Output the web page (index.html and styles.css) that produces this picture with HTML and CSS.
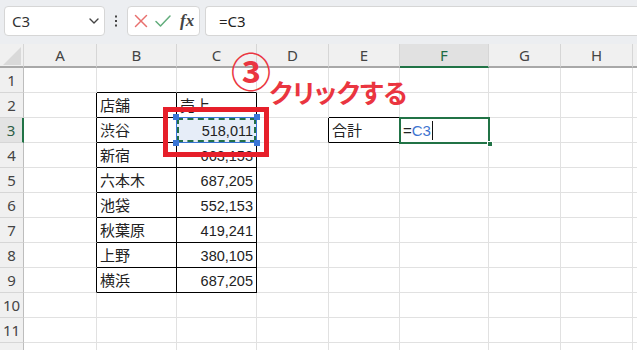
FILE: index.html
```html
<!DOCTYPE html>
<html lang="ja">
<head>
    <meta charset="UTF-8">
    <title>Excel - C3参照</title>
    <link rel="stylesheet" href="styles.css">
</head>
<body>
    <div class="toolbar">
        <div class="namebox">
            <span>C3</span>
            <svg width="12" height="8" viewBox="0 0 12 8" fill="none" stroke="#444" stroke-width="1.4" stroke-linecap="round" stroke-linejoin="round">
                <path d="M2 2l4 4 4-4"></path>
            </svg>
        </div>
        <div class="dots">
            <svg width="4" height="12" viewBox="0 0 4 12" fill="#444">
                <rect x="1" y="0.5" width="2" height="2"></rect>
                <rect x="1" y="5" width="2" height="2"></rect>
                <rect x="1" y="9.5" width="2" height="2"></rect>
            </svg>
        </div>
        <div class="btns">
            <svg width="14" height="14" viewBox="0 0 14 14" fill="none" stroke="#e8706e" stroke-width="1.5" stroke-linecap="round">
                <path d="M1.5 1.5l11 11"></path>
                <path d="M12.5 1.5l-11 11"></path>
            </svg>
            <svg width="16" height="14" viewBox="0 0 16 14" fill="none" stroke="#62ad7c" stroke-width="1.5" stroke-linecap="round" stroke-linejoin="round">
                <path d="M1 7.5l4.5 4.5 9.5-10"></path>
            </svg>
            <span class="fx">fx</span>
        </div>
        <div class="formula">=C3</div>
    </div>
    <div class="strip"></div>

    <div class="sheet">
        <!-- header -->
        <div class="c ch corner"></div>
        <div class="c ch">A</div>
        <div class="c ch">B</div>
        <div class="c ch">C</div>
        <div class="c ch">D</div>
        <div class="c ch">E</div>
        <div class="c ch on">F</div>
        <div class="c ch">G</div>
        <div class="c ch">H</div>
        <div class="c ch"></div>

        <!-- 1 -->
        <div class="c rh">1</div>
        <div class="c"></div>
        <div class="c bb"></div>
        <div class="c bb"></div>
        <div class="c"></div><div class="c"></div><div class="c"></div><div class="c"></div><div class="c"></div><div class="c"></div>

        <!-- 2 -->
        <div class="c rh">2</div>
        <div class="c br"></div>
        <div class="c br bb">店舗</div>
        <div class="c br bb">売上</div>
        <div class="c"></div>
        <div class="c bb"></div>
        <div class="c"></div><div class="c"></div><div class="c"></div><div class="c"></div>

        <!-- 3 -->
        <div class="c rh on">3</div>
        <div class="c br"></div>
        <div class="c br bb">渋谷</div>
        <div class="c br bb num c3">518,011
            <span class="h tl"></span><span class="h tr"></span><span class="h bl"></span><span class="h br-h"></span>
        </div>
        <div class="c br"></div>
        <div class="c br bb">合計</div>
        <div class="c f3">=<span class="ref">C3</span><span class="caret"></span><span class="fill"></span></div>
        <div class="c"></div><div class="c"></div><div class="c"></div>

        <!-- 4 -->
        <div class="c rh">4</div>
        <div class="c br"></div>
        <div class="c br bb">新宿</div>
        <div class="c br bb num">663,153</div>
        <div class="c"></div><div class="c"></div><div class="c"></div><div class="c"></div><div class="c"></div><div class="c"></div>

        <!-- 5 -->
        <div class="c rh">5</div>
        <div class="c br"></div>
        <div class="c br bb">六本木</div>
        <div class="c br bb num">687,205</div>
        <div class="c"></div><div class="c"></div><div class="c"></div><div class="c"></div><div class="c"></div><div class="c"></div>

        <!-- 6 -->
        <div class="c rh">6</div>
        <div class="c br"></div>
        <div class="c br bb">池袋</div>
        <div class="c br bb num">552,153</div>
        <div class="c"></div><div class="c"></div><div class="c"></div><div class="c"></div><div class="c"></div><div class="c"></div>

        <!-- 7 -->
        <div class="c rh">7</div>
        <div class="c br"></div>
        <div class="c br bb">秋葉原</div>
        <div class="c br bb num">419,241</div>
        <div class="c"></div><div class="c"></div><div class="c"></div><div class="c"></div><div class="c"></div><div class="c"></div>

        <!-- 8 -->
        <div class="c rh">8</div>
        <div class="c br"></div>
        <div class="c br bb">上野</div>
        <div class="c br bb num">380,105</div>
        <div class="c"></div><div class="c"></div><div class="c"></div><div class="c"></div><div class="c"></div><div class="c"></div>

        <!-- 9 -->
        <div class="c rh">9</div>
        <div class="c br"></div>
        <div class="c br bb">横浜</div>
        <div class="c br bb num">687,205</div>
        <div class="c"></div><div class="c"></div><div class="c"></div><div class="c"></div><div class="c"></div><div class="c"></div>

        <!-- 10 -->
        <div class="c rh">10</div>
        <div class="c"></div><div class="c"></div><div class="c"></div><div class="c"></div><div class="c"></div><div class="c"></div><div class="c"></div><div class="c"></div><div class="c"></div>

        <!-- 11 -->
        <div class="c rh">11</div>
        <div class="c"></div><div class="c"></div><div class="c"></div><div class="c"></div><div class="c"></div><div class="c"></div><div class="c"></div><div class="c"></div><div class="c"></div>

        <!-- 12: only the top edge shows -->
        <div class="c rh"></div>
        <div class="c"></div><div class="c"></div><div class="c"></div><div class="c"></div><div class="c"></div><div class="c"></div><div class="c"></div><div class="c"></div><div class="c"></div>

        <!-- annotations -->
        <div class="mark"></div>
        <div class="step">③</div>
        <div class="note">クリックする</div>
    </div>
</body>
</html>
```

FILE: styles.css
```css
:root {
    --bar-bg: #eceef1;
    --head-bg: #f0f0f0;
    --grid: #e1e1e1;
    --green: #217346;
    --blue: #3a76d6;
    --red: #e61f2a;
    --note: #ea3540;
}

* {
    margin: 0;
    padding: 0;
    box-sizing: border-box;
}

body {
    width: 637px;
    height: 350px;
    overflow: hidden;
    background: var(--bar-bg);
    font-family: "Noto Sans", "Liberation Sans", sans-serif;
    color: #333;
}

/* formula bar */
.toolbar {
    display: flex;
    height: 36px;
    padding: 6px 0 0 4px;
}

.namebox {
    width: 101px;
    background: #fff;
    border: 1px solid #d6d6d6;
    border-radius: 4px;
    display: flex;
    align-items: center;
    justify-content: space-between;
    padding: 0 4px 0 7px;
    font-size: 15px;
}

.dots {
    width: 22px;
    display: flex;
    align-items: center;
    justify-content: center;
}

.btns {
    width: 73px;
    background: #fff;
    border: 1px solid #d6d6d6;
    border-radius: 4px;
    display: flex;
    align-items: center;
    padding-left: 6px;
    gap: 7px;
}

.fx {
    font-family: "Liberation Serif", serif;
    font-style: italic;
    font-weight: bold;
    font-size: 17px;
    color: #444;
    margin-left: 2px;
}

.formula {
    flex: 1;
    margin-left: 5px;
    background: #fff;
    border: 1px solid #d6d6d6;
    border-right: none;
    border-radius: 4px 0 0 4px;
    display: flex;
    align-items: center;
    padding-left: 13px;
    font-size: 15px;
    color: #222;
}

.strip {
    height: 8px;
}

/* sheet */
.sheet {
    position: relative;
    display: grid;
    grid-template-columns: 24px 73px 80px 80px 72px 71px 89px 72px 72px 1fr;
    grid-template-rows: 24px;
    grid-auto-rows: 25px;
    height: 306px;
    overflow: hidden;
    background: #fff;
    font-family: "Liberation Sans", "Noto Sans CJK JP", sans-serif;
    font-size: 15px;
    color: #222;
}

.c {
    border-right: 1px solid var(--grid);
    border-bottom: 1px solid var(--grid);
    padding: 1px 3px 0;
    line-height: 24px;
    white-space: nowrap;
    overflow: hidden;
}

.ch {
    background: var(--head-bg);
    border-right-color: #d6d6d6;
    border-bottom: 2px solid #a8a8a8;
    text-align: center;
    font-family: "Noto Sans", sans-serif;
    font-size: 15px;
    line-height: 22px;
    padding: 0;
    color: #444;
}

.ch.on {
    background: #e1e1e1;
    border-bottom-color: var(--green);
    color: #1d6b44;
}

.corner {
    position: relative;
}

.corner::after {
    content: "";
    position: absolute;
    right: 2px;
    bottom: 1px;
    width: 18px;
    height: 18px;
    background: #d9d9d9;
    clip-path: polygon(100% 0, 100% 100%, 0 100%);
}

.rh {
    background: var(--head-bg);
    border-right-color: #bdbdbd;
    border-bottom-color: #d6d6d6;
    text-align: center;
    font-family: "Noto Sans", sans-serif;
    font-size: 15px;
    padding: 0;
    color: #444;
}

.rh.on {
    background: #e3e3e3;
    border-right: 2px solid var(--green);
    color: #2d5e46;
}

.br {
    border-right-color: #000;
}

.bb {
    border-bottom-color: #000;
}

.num {
    text-align: right;
    font-size: 14.5px;
}

/* referenced cell */
.c3 {
    position: relative;
    overflow: visible;
    background: #e6edf8;
}

.c3::before {
    content: "";
    position: absolute;
    inset: -1px;
    border: 1px solid var(--blue);
}

.c3::after {
    content: "";
    position: absolute;
    inset: 0;
    border: 2px dashed #237048;
}

.h {
    position: absolute;
    width: 6px;
    height: 6px;
    background: var(--blue);
    z-index: 1;
}

.tl { left: -4px; top: -4px; }
.tr { right: -4px; top: -4px; }
.bl { left: -4px; bottom: -4px; }
.br-h { right: -4px; bottom: -4px; }

/* active cell */
.f3 {
    position: relative;
    overflow: visible;
    padding-left: 3px;
}

.f3::after {
    content: "";
    position: absolute;
    inset: -1px -2px -2px -1px;
    border: 2px solid var(--green);
}

.ref {
    color: #3f74d0;
}

.caret {
    display: inline-block;
    width: 1px;
    height: 19px;
    background: #111;
    margin-left: 1px;
    vertical-align: -4px;
}

.fill {
    position: absolute;
    right: -5px;
    bottom: -5px;
    width: 6px;
    height: 6px;
    background: var(--green);
    border: 1px solid #fff;
    z-index: 1;
}

/* annotations */
.mark {
    position: absolute;
    left: 163px;
    top: 63px;
    width: 106px;
    height: 50px;
    border: 5px solid var(--red);
}

.step {
    position: absolute;
    left: 231px;
    top: 6px;
    font-family: "Noto Sans CJK JP", sans-serif;
    font-weight: bold;
    font-size: 40px;
    line-height: 1;
    color: var(--note);
}

.note {
    position: absolute;
    left: 269px;
    top: 35px;
    font-family: "Noto Sans CJK JP", sans-serif;
    font-feature-settings: "palt";
    font-weight: bold;
    font-size: 26px;
    line-height: 1;
    color: var(--note);
}
```
